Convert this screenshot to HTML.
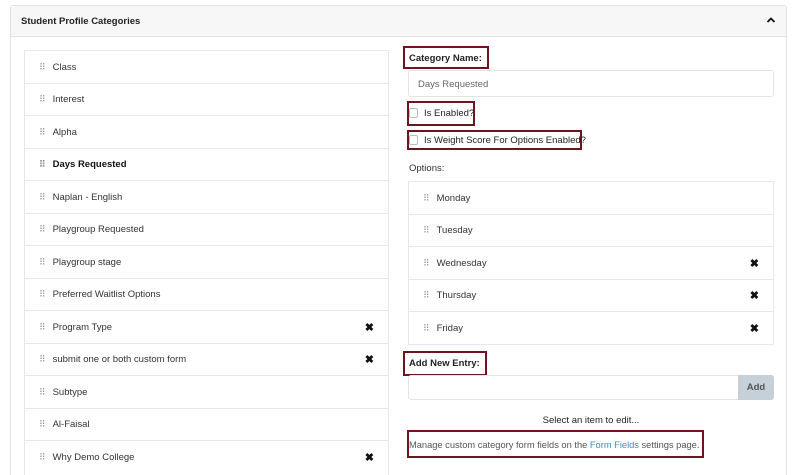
<!DOCTYPE html>
<html><head><meta charset="utf-8"><style>
*{box-sizing:border-box;margin:0;padding:0}
html,body{width:800px;height:475px;overflow:hidden}
body{background:#fff;font-family:"Liberation Sans",sans-serif;font-size:9.5px;color:#333}
#wrap{position:relative;width:800px;height:475px;overflow:hidden}
.card{position:absolute;left:10px;top:5px;width:777px;height:470px;border:1px solid #e3e3e3;border-bottom:none;border-radius:3px 3px 0 0}
.hdr{height:31px;background:#f7f7f7;border-bottom:1px solid #e3e3e3;font-weight:bold;font-size:9.5px;color:#222;padding:10px 10px}
.chev{position:absolute;right:10px;top:9px}
.list{position:absolute;border:1px solid #e8e8e8;border-bottom:none}
.row{height:32.5px;border-bottom:1px solid #e8e8e8;display:flex;align-items:center;padding-left:14px;position:relative;color:#333;padding-top:1px}
.row .g{color:#999;font-size:9px;margin-right:8px;letter-spacing:-1px}
.row .x{position:absolute;right:14px;font-weight:bold;font-size:11px;color:#111}
.box{position:absolute;border:2px solid #6d1421}
.lbl{position:absolute;color:#222;white-space:nowrap}
.inp{position:absolute;border:1px solid #e3e3e3;border-radius:3px}
.cb{display:inline-block;width:9px;height:10px;border:1px solid #bbb;border-radius:2px;vertical-align:middle;margin-right:6px}
</style></head><body><div id="wrap">
<div class="card"><div class="hdr">Student Profile Categories</div>
<svg class="chev" width="10" height="10" viewBox="0 0 10 10"><path d="M1.5 7L5 3.5L8.5 7" stroke="#111" stroke-width="1.8" fill="none"/></svg></div>
<div class="list" style="left:24px;top:50px;width:365px;height:425px;overflow:hidden">
<div class="row"><span class="g">⠿</span>Class</div>
<div class="row"><span class="g">⠿</span>Interest</div>
<div class="row"><span class="g">⠿</span>Alpha</div>
<div class="row" style="font-weight:bold;color:#111"><span class="g">⠿</span>Days Requested</div>
<div class="row"><span class="g">⠿</span>Naplan - English</div>
<div class="row"><span class="g">⠿</span>Playgroup Requested</div>
<div class="row"><span class="g">⠿</span>Playgroup stage</div>
<div class="row"><span class="g">⠿</span>Preferred Waitlist Options</div>
<div class="row"><span class="g">⠿</span>Program Type<span class="x">✖</span></div>
<div class="row"><span class="g">⠿</span>submit one or both custom form<span class="x">✖</span></div>
<div class="row"><span class="g">⠿</span>Subtype</div>
<div class="row"><span class="g">⠿</span>Al-Faisal</div>
<div class="row" style="border-bottom:none"><span class="g">⠿</span>Why Demo College<span class="x">✖</span></div>
</div>
<div class="box" style="left:403px;top:46px;width:86px;height:23px"></div>
<div class="lbl" style="left:409px;top:53px;font-weight:bold">Category Name:</div>
<div class="inp" style="left:408px;top:70px;width:366px;height:27px;padding:8px 9px;color:#666">Days Requested</div>
<div class="box" style="left:407px;top:101px;width:68px;height:25px"></div>
<div class="lbl" style="left:409px;top:108px"><span class="cb"></span>Is Enabled?</div>
<div class="box" style="left:407px;top:130px;width:175px;height:20px"></div>
<div class="lbl" style="left:409px;top:135px"><span class="cb"></span>Is Weight Score For Options Enabled?</div>
<div class="lbl" style="left:409px;top:163px;color:#333">Options:</div>
<div class="list" style="left:408px;top:181px;width:366px;">
<div class="row"><span class="g">⠿</span>Monday</div>
<div class="row"><span class="g">⠿</span>Tuesday</div>
<div class="row"><span class="g">⠿</span>Wednesday<span class="x">✖</span></div>
<div class="row"><span class="g">⠿</span>Thursday<span class="x">✖</span></div>
<div class="row"><span class="g">⠿</span>Friday<span class="x">✖</span></div>
</div>
<div class="box" style="left:403px;top:351px;width:84px;height:25px"></div>
<div class="lbl" style="left:409px;top:358px;font-weight:bold">Add New Entry:</div>
<div class="inp" style="left:408px;top:375px;width:366px;height:25px"></div>
<div style="position:absolute;left:738px;top:375px;width:36px;height:25px;background:#c5d0d8;border-radius:0 3px 3px 0;font-weight:bold;color:#555;text-align:center;line-height:25px">Add</div>
<div class="lbl" style="left:408px;width:366px;text-align:center;top:415px">Select an item to edit...</div>
<div class="box" style="left:407px;top:430px;width:297px;height:28px"></div>
<div class="lbl" style="left:409px;top:440px;color:#555;font-size:9.3px">Manage custom category form fields on the <span style="color:#3a8fb7">Form Fields</span> settings page.</div>
</div></body></html>
